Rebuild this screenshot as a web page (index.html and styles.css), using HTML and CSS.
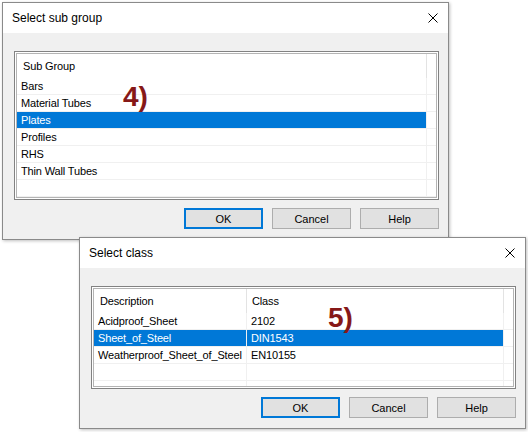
FILE: index.html
```html
<!DOCTYPE html>
<html lang="en">
<head>
    <meta charset="UTF-8">
    <meta name="viewport" content="width=device-width, initial-scale=1.0">
    <title>Select sub group / Select class</title>
    <link rel="stylesheet" href="styles.css">
</head>
<body>
    <div class="desktop">
        <!-- Dialog 1 -->
        <section class="window win-group">
            <div class="titlebar">
                <span class="title">Select sub group</span>
                <span class="close">
                    <svg width="10" height="10" viewBox="0 0 10 10"><path d="M0.5 0.5 L9.5 9.5 M9.5 0.5 L0.5 9.5" stroke="#000" stroke-width="1" fill="none"/></svg>
                </span>
            </div>
            <div class="body">
                <div class="list list-group">
                    <div class="list-inner">
                        <div class="row head"><div class="cell c-sub">Sub Group</div><div class="cell filler"></div></div>
                        <div class="row"><div class="cell c-sub">Bars</div><div class="cell filler"></div></div>
                        <div class="row"><div class="cell c-sub">Material Tubes</div><div class="cell filler"></div></div>
                        <div class="row sel"><div class="cell c-sub">Plates</div><div class="cell filler"></div></div>
                        <div class="row"><div class="cell c-sub">Profiles</div><div class="cell filler"></div></div>
                        <div class="row"><div class="cell c-sub">RHS</div><div class="cell filler"></div></div>
                        <div class="row"><div class="cell c-sub">Thin Wall Tubes</div><div class="cell filler"></div></div>
                        <div class="row"><div class="cell c-sub"></div><div class="cell filler"></div></div>
                    </div>
                </div>
                <div class="buttons">
                    <button class="btn default">OK</button>
                    <button class="btn">Cancel</button>
                    <button class="btn">Help</button>
                </div>
            </div>
        </section>

        <!-- Dialog 2 -->
        <section class="window win-class">
            <div class="titlebar">
                <span class="title">Select class</span>
                <span class="close">
                    <svg width="10" height="10" viewBox="0 0 10 10"><path d="M0.5 0.5 L9.5 9.5 M9.5 0.5 L0.5 9.5" stroke="#000" stroke-width="1" fill="none"/></svg>
                </span>
            </div>
            <div class="body">
                <div class="list list-class">
                    <div class="list-inner">
                        <div class="row head"><div class="cell c-desc">Description</div><div class="cell c-class">Class</div><div class="cell filler"></div></div>
                        <div class="row"><div class="cell c-desc">Acidproof_Sheet</div><div class="cell c-class">2102</div><div class="cell filler"></div></div>
                        <div class="row sel"><div class="cell c-desc">Sheet_of_Steel</div><div class="cell c-class">DIN1543</div><div class="cell filler"></div></div>
                        <div class="row"><div class="cell c-desc">Weatherproof_Sheet_of_Steel</div><div class="cell c-class">EN10155</div><div class="cell filler"></div></div>
                        <div class="row"><div class="cell c-desc"></div><div class="cell c-class"></div><div class="cell filler"></div></div>
                        <div class="row"><div class="cell c-desc"></div><div class="cell c-class"></div><div class="cell filler"></div></div>
                    </div>
                </div>
                <div class="buttons">
                    <button class="btn default">OK</button>
                    <button class="btn">Cancel</button>
                    <button class="btn">Help</button>
                </div>
            </div>
        </section>

        <!-- step markers -->
        <span class="marker m4">4)</span>
        <span class="marker m5">5)</span>
    </div>
</body>
</html>
```

FILE: styles.css
```css
body {
    margin: 0;
    background-color: #fff;
    font-family: "Liberation Sans", Arial, sans-serif;
    color: #000;
}

.desktop {
    position: relative;
    width: 528px;
    height: 432px;
    overflow: hidden;
}

/* dialog windows sit on a free canvas */
.window {
    position: absolute;
    width: 447px;
    box-sizing: border-box;
    border: 1px solid #8a8a8a;
    background-color: #f0f0f0;
    box-shadow: 1px 1px 3px rgba(0, 0, 0, 0.25);
}

.win-group {
    left: 2px;
    top: 2px;
}

.win-class {
    left: 79px;
    top: 237px;
}

.titlebar {
    height: 30px;
    background-color: #fff;
    display: flex;
    align-items: center;
    justify-content: space-between;
    padding-left: 9px;
}

.title {
    font-size: 12px;
}

.close {
    width: 30px;
    height: 30px;
    display: flex;
    align-items: center;
    justify-content: center;
}

.body {
    padding: 18px 9px 10px 11px;
}

.list {
    box-sizing: border-box;
    border: 1px solid #828282;
    padding: 1px;
    background-color: #fff;
}

.list-group {
    height: 149px;
}

.list-class {
    height: 103px;
}

.list-inner {
    box-sizing: border-box;
    height: 100%;
    border: 1px solid #b4b4b4;
    overflow: hidden;
}

.row {
    display: flex;
    height: 17px;
    box-sizing: border-box;
    border-bottom: 1px solid #f0f0f0;
}

.row.head {
    height: 24px;
    border-bottom: none;
}

.cell {
    box-sizing: border-box;
    padding-left: 4px;
    font-size: 11px;
    line-height: 16px;
    letter-spacing: -0.15px;
    white-space: nowrap;
    overflow: hidden;
    border-right: 1px solid #f0f0f0;
}

.head .cell {
    line-height: 24px;
    padding-left: 6px;
    border-right-color: #e3e3e3;
}

.c-sub {
    width: 410px;
}

.c-desc {
    width: 153px;
}

.c-class {
    width: 257px;
}

.head .c-class {
    padding-left: 5px;
}

.filler {
    flex: 1;
    border-right: none;
}

.row.sel .cell:not(.filler) {
    background-color: #0078d7;
    color: #fff;
}

.buttons {
    display: flex;
    justify-content: flex-end;
    gap: 9px;
    margin-top: 8px;
}

.btn {
    width: 79px;
    height: 21px;
    box-sizing: border-box;
    padding: 0;
    border: 1px solid #adadad;
    background-color: #e1e1e1;
    font-family: "Liberation Sans", Arial, sans-serif;
    font-size: 11px;
    color: #000;
}

.btn.default {
    border: 2px solid #0078d7;
}

.marker {
    position: absolute;
    font-size: 28px;
    line-height: 28px;
    font-weight: bold;
    color: #861818;
}

.m4 {
    left: 123px;
    top: 83px;
}

.m5 {
    left: 328px;
    top: 304px;
}
```
